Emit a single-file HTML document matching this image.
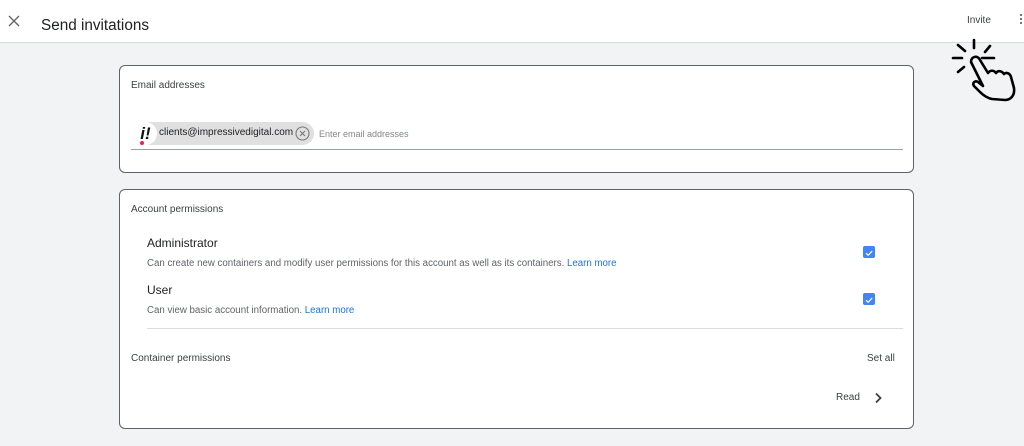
<!DOCTYPE html>
<html><head><meta charset="utf-8"><style>
*{margin:0;padding:0;box-sizing:border-box}
body{width:1024px;height:446px;background:#f1f3f4;font-family:"Liberation Sans",Arial,sans-serif;color:#3c4043;position:relative;overflow:hidden}
.hdr{position:absolute;left:0;top:0;width:1024px;height:43px;background:#fff;border-bottom:1px solid #dadce0}
.t{position:absolute;white-space:nowrap}
.card{position:absolute;left:119px;width:795px;background:#fff;border:1px solid #5f6368;border-radius:6px}
.cb{position:absolute;left:863px;width:12px;height:12px;background:#4285f4;border-radius:2px}
a{color:#1a73e8;text-decoration:none}
</style></head><body>
<div class="hdr">
 <svg class="t" style="left:8px;top:15px" width="12" height="12" viewBox="0 0 12 12"><path d="M1 1L11 11M11 1L1 11" stroke="#5f6368" stroke-width="1.3"/></svg>
 <div class="t" style="left:41px;top:17px;font-size:15.3px;color:#202124">Send invitations</div>
 <div class="t" style="left:967px;top:15px;font-size:10px;color:#3c4043">Invite</div>
 <div class="t" style="left:1020px;top:14px;width:2px;height:2px;background:#777;box-shadow:0 4px #777,0 8px #777"></div>
</div>
<svg class="t" style="left:945px;top:35px" width="79" height="70" viewBox="0 0 79 70">
 <g stroke="#000" stroke-width="2.6" stroke-linecap="round" stroke-linejoin="round" fill="none">
  <path d="M29 5L29 13M13 10L20 16M45 11L40 17M8 23L17 23M37 23L49 23M13 37L19 32"/>
  <path d="M26 27C26 21 33 20 35 25L43 38C45 35 49 35 51 38C53 35 57 36 59 39C61 37 65 38 66 42L69 53C70 60 66 65 60 65L47 64C42 63 38 60 35 57L29 51C27 48 30 45 33 47L38 51Z"/>
 </g>
</svg>
<div class="card" style="top:65px;height:108px">
 <div class="t" style="left:11px;top:14px;font-size:10px">Email addresses</div>
 <div class="t" style="left:14px;top:56px;width:180px;height:23px;background:#e0e0e0;border-radius:12px"></div>
 <div class="t" style="left:14px;top:56px;width:23px;height:23px;background:#fff;border-radius:50%;font-size:17px;font-weight:bold;font-style:italic;color:#111;text-align:center;line-height:23px">i!</div>
 <div class="t" style="left:20px;top:75px;width:4px;height:4px;background:#e91e63;border-radius:50%"></div>
 <div class="t" style="left:39px;top:61px;font-size:10px;color:#202124">clients@impressivedigital.com</div>
 <svg class="t" style="left:175px;top:60px" width="15" height="15" viewBox="0 0 15 15"><circle cx="7.5" cy="7.5" r="6.5" fill="none" stroke="#777" stroke-width="1.1"/><path d="M5 5L10 10M10 5L5 10" stroke="#777" stroke-width="1.1"/></svg>
 <div class="t" style="left:199px;top:63px;font-size:9px;color:#80868b">Enter email addresses</div>
 <div class="t" style="left:11px;top:83px;width:772px;height:1px;background:#9aa0a6"></div>
</div>
<div class="card" style="top:189px;height:240px">
 <div class="t" style="left:11px;top:14px;font-size:10px">Account permissions</div>
 <div class="t" style="left:27px;top:46px;font-size:12px;color:#202124">Administrator</div>
 <div class="t" style="left:27px;top:68px;font-size:9.7px;color:#5f6368">Can create new containers and modify user permissions for this account as well as its containers. <a>Learn more</a></div>
 <div class="t" style="left:27px;top:93px;font-size:12px;color:#202124">User</div>
 <div class="t" style="left:27px;top:115px;font-size:9.7px;color:#5f6368">Can view basic account information. <a>Learn more</a></div>
 <div class="t" style="left:27px;top:138px;width:756px;height:1px;background:#dadce0"></div>
 <div class="t" style="left:11px;top:163px;font-size:10px">Container permissions</div>
 <div class="t" style="left:747px;top:163px;font-size:10px">Set all</div>
 <div class="t" style="left:716px;top:202px;font-size:10px">Read</div>
 <svg class="t" style="left:754px;top:202px" width="8" height="12" viewBox="0 0 8 12"><path d="M2 1.5L6.5 6L2 10.5" stroke="#3c4043" stroke-width="1.8" fill="none"/></svg>
</div>
<div class="cb" style="top:246px"><svg width="12" height="12"><path d="M3 6.2L5.2 8.3L9.2 4" stroke="#fff" stroke-width="1.2" fill="none"/></svg></div>
<div class="cb" style="top:293px"><svg width="12" height="12"><path d="M3 6.2L5.2 8.3L9.2 4" stroke="#fff" stroke-width="1.2" fill="none"/></svg></div>
</body></html>
